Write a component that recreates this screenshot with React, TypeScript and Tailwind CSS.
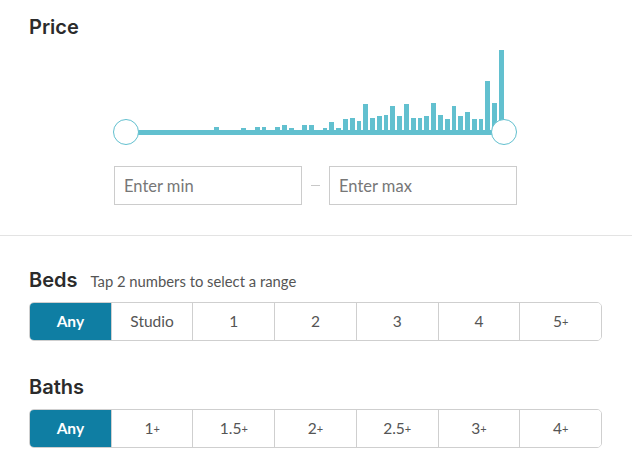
import { useState } from "react";

const bars = [
  0, 0, 0, 0, 0, 0, 0, 0, 0, 0, 0, 0, 0,
  3, 0, 0, 0, 2, 0, 3, 3, 0, 3, 5, 2, 0, 5, 5, 0, 2, 8, 2, 11, 12, 9, 26, 12,
  14, 15, 24, 14, 26, 12, 12, 14, 27, 15, 11, 24, 14, 18, 11, 11, 49, 27, 80,
];

const beds = ["Any", "Studio", "1", "2", "3", "4", "5+"];
const baths = ["Any", "1+", "1.5+", "2+", "2.5+", "3+", "4+"];

function Label({ text }: { text: string }) {
  if (text.endsWith("+")) {
    return (
      <span>
        {text.slice(0, -1)}
        <span className="text-[11px] align-[1px]">+</span>
      </span>
    );
  }
  return <span>{text}</span>;
}

function Segmented({ options }: { options: string[] }) {
  const [selected, setSelected] = useState(0);
  return (
    <div className="flex w-[573px] h-[39px] border border-[#cfcfcf] rounded-[5px] overflow-hidden">
      {options.map((opt, i) => (
        <button
          key={opt}
          onClick={() => setSelected(i)}
          className={`flex-1 flex items-center justify-center text-[15.5px] ${
            i > 0 ? "border-l border-[#cfcfcf]" : ""
          } ${
            selected === i
              ? "bg-[#0f7ea3] text-white font-bold"
              : "bg-white text-[#555]"
          }`}
        >
          <Label text={opt} />
        </button>
      ))}
    </div>
  );
}

export default function App() {
  return (
    <div className="w-[632px] h-[461px] bg-white font-['Lato',sans-serif] text-[#333] overflow-hidden">
      <div className="px-[29px] pt-[14px] pb-[30px] border-b border-[#e3e3e3]">
        <h2 className="font-['Inter',sans-serif] font-semibold text-[20px] leading-[26px] text-[#2b2b2b]">
          Price
        </h2>
        <div className="relative w-[404px] ml-[84px] mt-[10px]">
          <div className="px-[13px]">
            <div className="flex items-end h-[80px] gap-[2px]">
              {bars.map((h, i) => (
                <div
                  key={i}
                  className="flex-1 bg-[#62c0cf]"
                  style={{ height: h }}
                />
              ))}
            </div>
            <div className="h-[5px] bg-[#62c0cf]" />
          </div>
          <div className="absolute left-0 top-[69px] w-[26px] h-[26px] rounded-full bg-white border-[1.5px] border-[#62c0cf]" />
          <div className="absolute right-0 top-[69px] w-[26px] h-[26px] rounded-full bg-white border-[1.5px] border-[#62c0cf]" />
        </div>
        <div className="flex items-center ml-[85px] mt-[31px]">
          <input
            placeholder="Enter min"
            className="w-[188px] h-[39px] border border-[#cccccc] px-[9px] text-[16.5px] placeholder:text-[#777] outline-none"
          />
          <div className="w-[27px] flex justify-center">
            <div className="w-[9px] h-px bg-[#c8c8c8]" />
          </div>
          <input
            placeholder="Enter max"
            className="w-[188px] h-[39px] border border-[#cccccc] px-[9px] text-[16.5px] placeholder:text-[#777] outline-none"
          />
        </div>
      </div>
      <div className="px-[29px] pt-[31px]">
        <div className="flex items-baseline gap-[13px]">
          <h2 className="font-['Inter',sans-serif] font-semibold text-[20px] leading-[26px] text-[#2b2b2b]">
            Beds
          </h2>
          <span className="text-[14.8px] text-[#555]">
            Tap 2 numbers to select a range
          </span>
        </div>
        <div className="mt-[9px]">
          <Segmented options={beds} />
        </div>
        <h2 className="mt-[33px] font-['Inter',sans-serif] font-semibold text-[20px] leading-[26px] text-[#2b2b2b]">
          Baths
        </h2>
        <div className="mt-[9px]">
          <Segmented options={baths} />
        </div>
      </div>
    </div>
  );
}
